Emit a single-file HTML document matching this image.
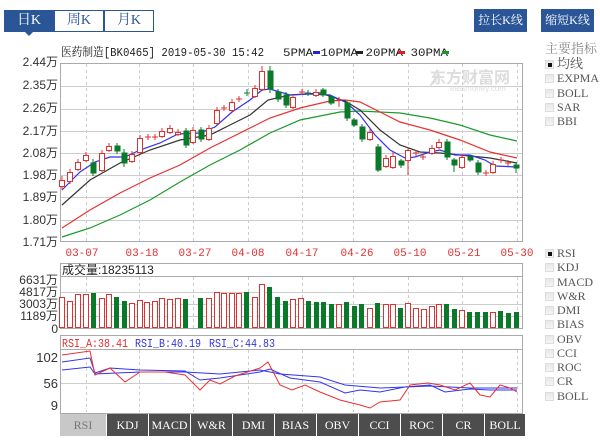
<!DOCTYPE html>
<html><head><meta charset="utf-8">
<style>
*{margin:0;padding:0;box-sizing:border-box}
body{width:600px;height:443px;background:#fff;position:relative;overflow:hidden;font-family:"Liberation Sans","Noto Sans CJK SC",sans-serif}
.tab{position:absolute;top:10px;height:22px;width:50px;border:1px solid #2a5597;color:#2a5597;font:14px "Liberation Serif","Noto Serif CJK SC",serif;text-align:center;line-height:20px;background:#fff}
.tab.on{background:#2a5597;color:#fff}
.btn{position:absolute;top:9px;height:23px;width:53px;background:#2a5597;color:#fff;font:12px "Liberation Serif","Noto Serif CJK SC",serif;text-align:center;line-height:23px}
.ck{position:absolute;left:545px;font:12px "Liberation Serif","Noto Serif CJK SC",serif;color:#555;height:14px;line-height:14px}
.ck i{display:inline-block;width:9px;height:9px;background:linear-gradient(#e8e8e8,#f4f4f4);border:1px solid #ddd;vertical-align:-1px;margin-right:3px;position:relative}
.ck i.c::after{content:"";position:absolute;left:2px;top:2px;width:4px;height:4px;background:#111}
.bt{position:absolute;top:414px;height:22px;width:41px;background:#4d4d4d;color:#fff;font:12px "Liberation Serif",serif;text-align:center;line-height:22px}
</style></head><body>
<div class="tab on" style="left:4px">日K</div>
<div class="tab" style="left:54px">周K</div>
<div class="tab" style="left:104px">月K</div>
<div style="position:absolute;left:25px;top:32px;width:0;height:0;border-left:4px solid transparent;border-right:4px solid transparent;border-top:4px solid #2a5597"></div>
<div class="btn" style="left:474px">拉长K线</div>
<div class="btn" style="left:541px">缩短K线</div>

<div class="ck" style="top:42px;font-size:13px;color:#888">主要指标</div>
<div class="ck" style="top:57px;font-size:13px"><i class="c"></i>均线</div>
<div class="ck" style="top:71px"><i></i>EXPMA</div>
<div class="ck" style="top:86px"><i></i>BOLL</div>
<div class="ck" style="top:100px"><i></i>SAR</div>
<div class="ck" style="top:114px"><i></i>BBI</div>

<div class="ck" style="top:246px"><i class="c"></i>RSI</div>
<div class="ck" style="top:260px"><i></i>KDJ</div>
<div class="ck" style="top:275px"><i></i>MACD</div>
<div class="ck" style="top:289px"><i></i>W&amp;R</div>
<div class="ck" style="top:303px"><i></i>DMI</div>
<div class="ck" style="top:317px"><i></i>BIAS</div>
<div class="ck" style="top:332px"><i></i>OBV</div>
<div class="ck" style="top:346px"><i></i>CCI</div>
<div class="ck" style="top:360px"><i></i>ROC</div>
<div class="ck" style="top:374px"><i></i>CR</div>
<div class="ck" style="top:389px"><i></i>BOLL</div>

<div class="bt" style="left:60px;width:46px;background:#c8c8c8;color:#777">RSI</div>
<div class="bt" style="left:107px">KDJ</div>
<div class="bt" style="left:149px">MACD</div>
<div class="bt" style="left:191px">W&amp;R</div>
<div class="bt" style="left:233px">DMI</div>
<div class="bt" style="left:275px">BIAS</div>
<div class="bt" style="left:317px">OBV</div>
<div class="bt" style="left:359px">CCI</div>
<div class="bt" style="left:401px">ROC</div>
<div class="bt" style="left:443px">CR</div>
<div class="bt" style="left:485px;width:40px">BOLL</div>

<svg width="600" height="443" style="position:absolute;left:0;top:0" xmlns="http://www.w3.org/2000/svg">
<g font-family="Liberation Mono,Noto Serif CJK SC,monospace" font-size="12">
<text x="61" y="56" fill="#222" textLength="203" lengthAdjust="spacingAndGlyphs">医药制造[BK0465] 2019-05-30 15:42</text>
<text x="283" y="56" fill="#222" font-size="11" textLength="165" lengthAdjust="spacingAndGlyphs">5PMA  10PMA  20PMA  30PMA  </text>
</g>
<rect x="313" y="51" width="7" height="3" fill="#2222dd"/>
<rect x="356" y="51" width="7" height="3" fill="#222"/>
<rect x="398" y="51" width="7" height="3" fill="#e02020"/>
<rect x="442" y="51" width="7" height="3" fill="#1a9a2a"/>
<rect x="60.5" y="63.5" width="462" height="178" fill="#fff" stroke="#aaa"/>
<g stroke="#ccc" stroke-width="1">
<line x1="61" y1="86.5" x2="522" y2="86.5"/><line x1="61" y1="109.5" x2="522" y2="109.5"/><line x1="61" y1="131.5" x2="522" y2="131.5"/><line x1="61" y1="153.5" x2="522" y2="153.5"/><line x1="61" y1="175.5" x2="522" y2="175.5"/><line x1="61" y1="197.5" x2="522" y2="197.5"/><line x1="61" y1="220.5" x2="522" y2="220.5"/>
</g>
<g stroke="#ccc" stroke-dasharray="3,3">
<line x1="86.5" y1="64" x2="86.5" y2="241"/><line x1="139.5" y1="64" x2="139.5" y2="241"/><line x1="193.5" y1="64" x2="193.5" y2="241"/><line x1="248.5" y1="64" x2="248.5" y2="241"/><line x1="302.5" y1="64" x2="302.5" y2="241"/><line x1="353.5" y1="64" x2="353.5" y2="241"/><line x1="408.5" y1="64" x2="408.5" y2="241"/><line x1="462.5" y1="64" x2="462.5" y2="241"/><line x1="517.5" y1="64" x2="517.5" y2="241"/>
<line x1="86.5" y1="277" x2="86.5" y2="328"/><line x1="139.5" y1="277" x2="139.5" y2="328"/><line x1="193.5" y1="277" x2="193.5" y2="328"/><line x1="248.5" y1="277" x2="248.5" y2="328"/><line x1="302.5" y1="277" x2="302.5" y2="328"/><line x1="353.5" y1="277" x2="353.5" y2="328"/><line x1="408.5" y1="277" x2="408.5" y2="328"/><line x1="462.5" y1="277" x2="462.5" y2="328"/><line x1="517.5" y1="277" x2="517.5" y2="328"/>
<line x1="86.5" y1="350" x2="86.5" y2="412"/><line x1="139.5" y1="350" x2="139.5" y2="412"/><line x1="193.5" y1="350" x2="193.5" y2="412"/><line x1="248.5" y1="350" x2="248.5" y2="412"/><line x1="302.5" y1="350" x2="302.5" y2="412"/><line x1="353.5" y1="350" x2="353.5" y2="412"/><line x1="408.5" y1="350" x2="408.5" y2="412"/><line x1="462.5" y1="350" x2="462.5" y2="412"/><line x1="517.5" y1="350" x2="517.5" y2="412"/>
</g>
<text x="470" y="83" font-size="16" font-weight="bold" fill="#ddd" text-anchor="middle" font-family="Noto Sans CJK SC,sans-serif">东方财富网</text>
<text x="478" y="91" font-size="8" fill="#ddd" text-anchor="middle">eastmoney.com</text>
<path d="M428 88 L440 70 L436 82 Z" fill="#ddd"/>
<g font-size="12" fill="#333" text-anchor="end" font-family="Liberation Sans,Noto Sans CJK SC,sans-serif">
<text x="58" y="66">2.44万</text><text x="58" y="89">2.35万</text><text x="58" y="112">2.26万</text><text x="58" y="135">2.17万</text><text x="58" y="157">2.08万</text><text x="58" y="179">1.98万</text><text x="58" y="201">1.89万</text><text x="58" y="224">1.80万</text><text x="58" y="246">1.71万</text>
</g>
<g font-size="11" fill="#e03030" text-anchor="middle" font-family="Liberation Mono,monospace">
<text x="82" y="256">03-07</text><text x="142" y="256">03-18</text><text x="195" y="256">03-27</text><text x="248" y="256">04-08</text><text x="302" y="256">04-17</text><text x="357" y="256">04-26</text><text x="410" y="256">05-10</text><text x="464" y="256">05-21</text><text x="517" y="256">05-30</text>
</g>
<g fill="none" stroke-width="1.2">
<polyline stroke="#1a9a2a" points="62,237 90,228 120,215 150,200 180,182 210,165 240,150 270,133 300,120 340,112 360,111 400,113 430,118 460,125 490,135 517,141"/>
<polyline stroke="#e83030" points="62,228 90,210 120,193 150,178 180,165 210,148 240,133 270,118 300,108 330,101 345,100 360,102 380,112 400,122 430,130 460,140 490,152 517,158"/>
<polyline stroke="#333" points="62,205 90,180 120,163 150,150 180,140 210,135 230,125 250,115 268,100 290,95 320,93 345,101 360,110 380,130 400,145 420,152 440,153 460,155 490,158 517,163"/>
<polyline stroke="#3333ee" points="62,190 80,172 95,162 110,157 125,157 140,150 160,143 178,134 200,133 215,127 232,112 250,100 262,90 270,89 290,95 310,94 330,95 347,103 360,115 375,135 390,150 405,158 415,157 430,152 440,150 455,155 470,155 485,160 495,166 517,167"/>
</g>
<g stroke="#e03030" fill="#fff" stroke-width="1">
<path d="M62 176V190M70 169V184M78 159V171M86 152V162M102 150V172M109 143V152M132 151V163M140 135V154M148 134V140M155 134V140M162 128V138M170 125V134M178 129V136M193 127V144M209 125V141M217 107V125M224 105V111M232 99V112M239 96V102M255 85V98M262 66V91M293 94V109M302 89V95M316 89V97M339 97V107M370 129V141M386 155V168M393 152V169M408 147V175M416 150V156M423 154V160M432 145V155M439 139V149M462 154V169M486 170V176M493 161V174M501 157V163M508 160V166"/>
<path d="M145 137H151M152 137H158M221 108H227M236 99H242M413 153H419M420 157H426M483 173H489M498 160H504M505 163H511M299 92H305M336 100H342"/>
<rect x="59.5" y="180.5" width="5" height="6"/><rect x="67.5" y="172.5" width="5" height="9"/><rect x="75.5" y="162.5" width="5" height="7"/><rect x="83.5" y="155.5" width="5" height="5"/><rect x="99.5" y="153.5" width="5" height="17"/><rect x="106.5" y="146.5" width="5" height="4"/><rect x="129.5" y="154.5" width="5" height="7"/><rect x="137.5" y="138.5" width="5" height="14"/><rect x="159.5" y="131.5" width="5" height="5"/><rect x="167.5" y="128.5" width="5" height="4"/><rect x="175.5" y="132.5" width="5" height="2"/><rect x="190.5" y="130.5" width="5" height="12"/><rect x="206.5" y="128.5" width="5" height="11"/><rect x="214.5" y="110.5" width="5" height="13"/><rect x="229.5" y="102.5" width="5" height="8"/><rect x="252.5" y="88.5" width="5" height="8"/><rect x="259.5" y="71.5" width="5" height="18"/><rect x="290.5" y="97.5" width="5" height="10"/><rect x="313.5" y="92.5" width="5" height="3"/><rect x="367.5" y="132.5" width="5" height="7"/><rect x="383.5" y="158.5" width="5" height="8"/><rect x="390.5" y="156.5" width="5" height="11"/><rect x="405.5" y="150.5" width="5" height="10"/><rect x="429.5" y="148.5" width="5" height="5"/><rect x="436.5" y="142.5" width="5" height="5"/><rect x="459.5" y="157.5" width="5" height="10"/><rect x="490.5" y="164.5" width="5" height="8"/>
</g>
<g stroke="#0a7a2a" fill="#0a7a2a">
<path d="M93 159V176M117 143V154M124 149V167M186 128V148M201 127V142M247 89V96M270 66V93M278 89V102M286 92V108M308 90V96M323 88V97M331 95V105M347 101V121M354 118V127M362 124V142M378 144V172M401 159V168M447 139V160M454 158V172M470 155V162M478 160V175M516 162V173"/>
<path d="M244 93H250M305 93H311"/>
<rect x="91" y="163" width="5" height="10"/><rect x="115" y="146" width="5" height="5"/><rect x="122" y="153" width="5" height="10"/><rect x="184" y="131" width="5" height="14"/><rect x="199" y="130" width="5" height="9"/><rect x="268" y="71" width="5" height="18"/><rect x="276" y="92" width="5" height="7"/><rect x="284" y="95" width="5" height="10"/><rect x="321" y="90" width="5" height="5"/><rect x="329" y="97" width="5" height="6"/><rect x="345" y="103" width="5" height="15"/><rect x="352" y="120" width="5" height="5"/><rect x="360" y="127" width="5" height="12"/><rect x="376" y="147" width="5" height="23"/><rect x="399" y="161" width="5" height="4"/><rect x="445" y="142" width="5" height="15"/><rect x="452" y="160" width="5" height="5"/><rect x="468" y="157" width="5" height="3"/><rect x="476" y="163" width="5" height="9"/><rect x="514" y="165" width="5" height="3"/>
</g>

<rect x="60.5" y="263.5" width="462" height="65" fill="none" stroke="#aaa"/>
<line x1="61" y1="276.5" x2="522" y2="276.5" stroke="#aaa"/>
<g stroke="#ccc"><line x1="61" y1="292.5" x2="522" y2="292.5"/><line x1="61" y1="304.5" x2="522" y2="304.5"/><line x1="61" y1="316.5" x2="522" y2="316.5"/></g>
<text x="62" y="274" font-size="12" fill="#222" font-family="Liberation Sans,Noto Sans CJK SC,sans-serif">成交量:18235113</text>
<g font-size="12" fill="#333" text-anchor="end" font-family="Liberation Sans,Noto Sans CJK SC,sans-serif">
<text x="58" y="284">6631万</text><text x="58" y="296">4817万</text><text x="58" y="308">3003万</text><text x="58" y="320">1189万</text><text x="58" y="333">0</text>
</g>
<g fill="#fff" stroke="#e03030">
<rect x="59.5" y="297.5" width="5" height="30"/><rect x="67.5" y="301.5" width="5" height="26"/><rect x="75.5" y="294.5" width="5" height="33"/><rect x="83.5" y="294.5" width="5" height="33"/><rect x="99.5" y="298.5" width="5" height="29"/><rect x="106.5" y="294.5" width="5" height="33"/><rect x="129.5" y="303.5" width="5" height="24"/><rect x="137.5" y="300.5" width="5" height="27"/><rect x="144.5" y="302.5" width="5" height="25"/><rect x="152.5" y="301.5" width="5" height="26"/><rect x="159.5" y="298.5" width="5" height="29"/><rect x="167.5" y="299.5" width="5" height="28"/><rect x="175.5" y="298.5" width="5" height="29"/><rect x="206.5" y="298.5" width="5" height="29"/><rect x="214.5" y="292.5" width="5" height="35"/><rect x="221.5" y="293.5" width="5" height="34"/><rect x="229.5" y="293.5" width="5" height="34"/><rect x="236.5" y="293.5" width="5" height="34"/><rect x="252.5" y="297.5" width="5" height="30"/><rect x="259.5" y="284.5" width="5" height="43"/><rect x="290.5" y="299.5" width="5" height="28"/><rect x="298.5" y="298.5" width="5" height="29"/><rect x="336.5" y="304.5" width="5" height="23"/><rect x="367.5" y="308.5" width="5" height="19"/><rect x="383.5" y="304.5" width="5" height="23"/><rect x="390.5" y="304.5" width="5" height="23"/><rect x="405.5" y="303.5" width="5" height="24"/><rect x="413.5" y="308.5" width="5" height="19"/><rect x="421.5" y="309.5" width="5" height="18"/><rect x="429.5" y="306.5" width="5" height="21"/><rect x="436.5" y="304.5" width="5" height="23"/><rect x="459.5" y="310.5" width="5" height="17"/><rect x="490.5" y="312.5" width="5" height="15"/>
</g>
<g fill="#0a7a2a">
<rect x="91" y="293" width="5" height="35"/><rect x="114" y="297" width="5" height="31"/><rect x="122" y="301" width="5" height="27"/><rect x="183" y="299" width="5" height="29"/><rect x="198" y="298" width="5" height="30"/><rect x="244" y="292" width="5" height="36"/><rect x="267" y="287" width="5" height="41"/><rect x="275" y="297" width="5" height="31"/><rect x="283" y="301" width="5" height="27"/><rect x="306" y="301" width="5" height="27"/><rect x="314" y="302" width="5" height="26"/><rect x="321" y="302" width="5" height="26"/><rect x="329" y="304" width="5" height="24"/><rect x="344" y="302" width="5" height="26"/><rect x="352" y="306" width="5" height="22"/><rect x="359" y="304" width="5" height="24"/><rect x="375" y="303" width="5" height="25"/><rect x="398" y="308" width="5" height="20"/><rect x="444" y="304" width="5" height="24"/><rect x="452" y="309" width="5" height="19"/><rect x="467" y="312" width="5" height="16"/><rect x="475" y="312" width="5" height="16"/><rect x="483" y="312" width="5" height="16"/><rect x="498" y="311" width="5" height="17"/><rect x="506" y="313" width="5" height="15"/><rect x="514" y="312" width="5" height="16"/>
</g>

<rect x="60.5" y="335.5" width="462" height="78" fill="none" stroke="#aaa"/>
<line x1="61" y1="349.5" x2="522" y2="349.5" stroke="#aaa"/>
<g stroke="#ccc"><line x1="61" y1="383.5" x2="522" y2="383.5"/></g>
<g font-size="12" font-family="Liberation Mono,monospace">
<text x="62" y="347" fill="#e03030" textLength="66" lengthAdjust="spacingAndGlyphs">RSI_A:38.41</text><text x="135" y="347" fill="#3333dd" textLength="66" lengthAdjust="spacingAndGlyphs">RSI_B:40.19</text><text x="209" y="347" fill="#3333dd" textLength="66" lengthAdjust="spacingAndGlyphs">RSI_C:44.83</text>
</g>
<g font-size="13" fill="#333" text-anchor="end" font-family="Liberation Sans,sans-serif">
<text x="58" y="362">102</text><text x="58" y="388">56</text><text x="58" y="410">9</text>
</g>
<g fill="none" stroke-width="1">
<polyline stroke="#3333ee" points="62,370 90,367 95,374 140,372 185,372 220,374 260,370 280,374 320,377 345,385 380,388 430,386 470,388 517,388"/>
<polyline stroke="#3333ee" points="62,362 90,358 95,373 110,368 140,370 185,371 200,380 220,378 260,372 270,369 290,378 320,382 345,393 360,390 380,392 405,387 430,385 445,392 470,389 490,390 517,390"/>
<polyline stroke="#e83030" points="62,355 90,351 95,375 110,368 125,382 140,372 165,372 185,375 200,390 210,380 220,384 235,376 260,368 268,362 280,385 292,390 305,385 320,392 340,400 360,405 370,408 380,402 400,400 410,385 428,383 440,385 455,390 470,383 480,395 490,397 500,385 510,388 517,392"/>
</g>
</svg>
</body></html>
